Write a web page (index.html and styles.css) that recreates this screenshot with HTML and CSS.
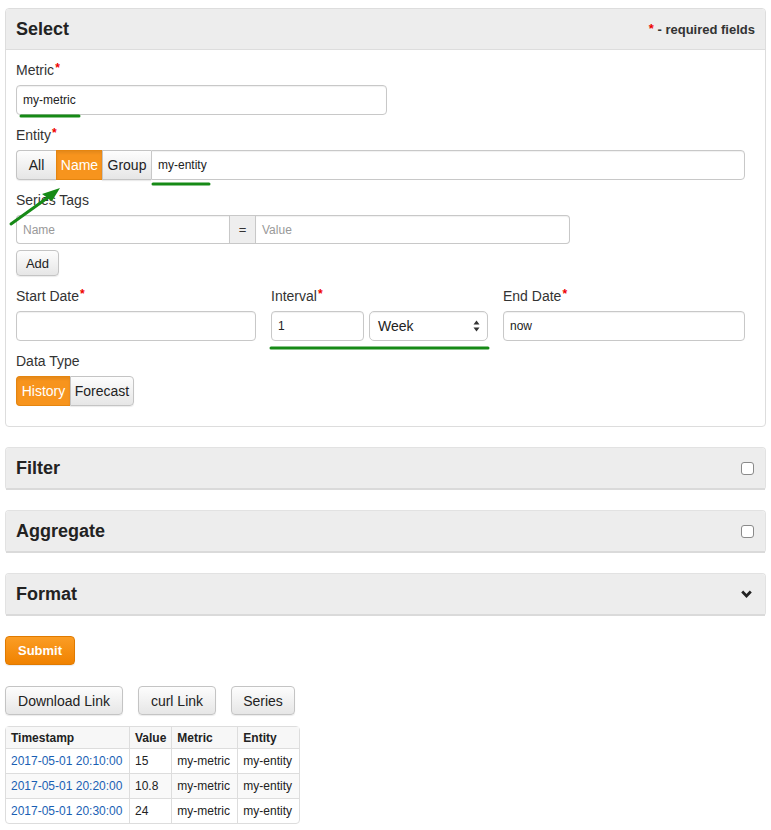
FILE: index.html
```html
<!DOCTYPE html>
<html>
<head>
<meta charset="utf-8">
<link rel="stylesheet" href="styles.css">
</head>
<body>
<div class="page">
  <div class="panel select-panel">
    <div class="panel-heading">
      <span class="title">Select</span>
      <span class="req"><span class="star">*</span> - required fields</span>
    </div>
    <div class="panel-body">
      <label class="lbl">Metric<span class="star">*</span></label>
      <div class="field metric"><span class="val">my-metric</span></div>

      <label class="lbl">Entity<span class="star">*</span></label>
      <div class="entity-group">
        <span class="btn seg">All</span>
        <span class="btn seg active">Name</span>
        <span class="btn seg">Group</span>
        <div class="field grow flat-left"><span class="val">my-entity</span></div>
      </div>

      <label class="lbl">Series Tags</label>
      <div class="tag-group">
        <div class="field tag-name flat-right"><span class="ph">Name</span></div>
        <span class="addon">=</span>
        <div class="field grow flat-left"><span class="ph">Value</span></div>
      </div>
      <div class="add-row"><span class="btn add">Add</span></div>

      <div class="date-row">
        <div class="col">
          <label class="lbl">Start Date<span class="star">*</span></label>
          <div class="field"></div>
        </div>
        <div class="col">
          <label class="lbl">Interval<span class="star">*</span></label>
          <div class="interval">
            <div class="field num"><span class="val">1</span></div>
            <div class="field sel">
              <span class="sel-text">Week</span>
              <svg class="updown" width="7" height="12" viewBox="0 0 7 12"><path d="M3.5 0.5 L6.5 4.5 L0.5 4.5 Z M3.5 11.5 L6.5 7.5 L0.5 7.5 Z" fill="#333"/></svg>
            </div>
          </div>
        </div>
        <div class="col">
          <label class="lbl">End Date<span class="star">*</span></label>
          <div class="field"><span class="val">now</span></div>
        </div>
      </div>

      <label class="lbl">Data Type</label>
      <div class="dtype">
        <span class="btn seg active">History</span>
        <span class="btn seg">Forecast</span>
      </div>
    </div>
  </div>

  <div class="panel collapsed">
    <div class="panel-heading">
      <span class="title">Filter</span>
      <span class="check"></span>
    </div>
  </div>
  <div class="panel collapsed">
    <div class="panel-heading">
      <span class="title">Aggregate</span>
      <span class="check"></span>
    </div>
  </div>
  <div class="panel collapsed">
    <div class="panel-heading">
      <span class="title">Format</span>
      <svg class="chev" width="11" height="8" viewBox="0 0 11 8"><path d="M1.2 1.6 L5.5 5.9 L9.8 1.6" fill="none" stroke="#222" stroke-width="2.8" stroke-linecap="butt" stroke-linejoin="miter"/></svg>
    </div>
  </div>

  <div class="submit-row"><span class="btn submit">Submit</span></div>

  <div class="link-row">
    <span class="btn link w-dl">Download Link</span>
    <span class="btn link w-curl">curl Link</span>
    <span class="btn link w-series">Series</span>
  </div>

  <table class="result">
    <thead>
      <tr><th class="c1">Timestamp</th><th class="c2">Value</th><th class="c3">Metric</th><th class="c4">Entity</th></tr>
    </thead>
    <tbody>
      <tr><td class="ts">2017-05-01 20:10:00</td><td>15</td><td>my-metric</td><td>my-entity</td></tr>
      <tr><td class="ts">2017-05-01 20:20:00</td><td>10.8</td><td>my-metric</td><td>my-entity</td></tr>
      <tr><td class="ts">2017-05-01 20:30:00</td><td>24</td><td>my-metric</td><td>my-entity</td></tr>
    </tbody>
  </table>

  <svg class="marks" width="771" height="830" viewBox="0 0 771 830">
    <g stroke="#168a16" stroke-width="3" stroke-linecap="round" fill="none">
      <line x1="21" y1="116" x2="79" y2="116"/>
      <line x1="153" y1="184" x2="209" y2="184"/>
      <line x1="271" y1="348" x2="488" y2="348"/>
      <line x1="11" y1="224" x2="50" y2="196"/>
    </g>
    <path d="M60 188 L42 194 L52 201 Z" fill="#168a16"/>
  </svg>
</div>
</body>
</html>
```

FILE: styles.css
```css
html, body {
  margin: 0;
  padding: 0;
  background: #fff;
}
body {
  font-family: "Liberation Sans", Arial, sans-serif;
  color: #333;
  font-size: 14px;
}
.page {
  position: relative;
  padding: 8px 5px 0 5px;
}
.panel {
  border: 1px solid #ddd;
  border-radius: 4px;
  margin-bottom: 20px;
  background: #fff;
}
.panel-heading {
  height: 40px;
  background: #ededed;
  border-bottom: 1px solid #ddd;
  border-radius: 3px 3px 0 0;
  display: flex;
  align-items: center;
  justify-content: space-between;
  padding: 0 10px;
}
.title {
  font-size: 18px;
  font-weight: bold;
  color: #222;
}
.req {
  font-size: 13px;
  font-weight: bold;
  color: #333;
}
.star {
  color: #e00;
  font-size: 12px;
  position: relative;
  top: -3px;
  margin-left: 1px;
  font-weight: bold;
}
.req .star { top: -1px; font-size: 13px; }
.panel-body {
  padding: 10px 20px 20px 10px;
}
.lbl {
  display: block;
  height: 20px;
  line-height: 20px;
  margin-bottom: 5px;
  font-size: 14px;
  color: #333;
}
.field {
  height: 30px;
  box-sizing: border-box;
  border: 1px solid #c8c8c8;
  border-radius: 4px;
  box-shadow: inset 0 1px 1px rgba(0,0,0,0.06);
  background: #fff;
  display: flex;
  align-items: center;
  padding: 0 6px;
  font-size: 12px;
  color: #222;
}
.metric {
  width: 371px;
  margin-bottom: 10px;
}
.ph { color: #999; }
.grow { flex: 1; }
.flat-left { border-top-left-radius: 0; border-bottom-left-radius: 0; }
.flat-right { border-top-right-radius: 0; border-bottom-right-radius: 0; }

.btn {
  display: inline-flex;
  align-items: center;
  justify-content: center;
  box-sizing: border-box;
  border: 1px solid #c4c4c4;
  border-radius: 4px;
  background: linear-gradient(#fdfdfd, #e6e6e6);
  color: #222;
  font-size: 14px;
  box-shadow: 0 1px 1px rgba(0,0,0,0.08);
}
.entity-group {
  display: flex;
  height: 30px;
  margin-bottom: 10px;
}
.entity-group .seg {
  height: 30px;
  border-radius: 0;
  border-right: none;
}
.entity-group .seg:first-child { width: 40px; border-radius: 4px 0 0 4px; }
.entity-group .seg:nth-child(2) { width: 46px; }
.entity-group .seg:nth-child(3) { width: 49px; }
.seg.active {
  background: #f7941d;
  border-color: #e5850f;
  color: #fff;
  box-shadow: inset 0 2px 3px rgba(0,0,0,0.08);
}
.tag-group {
  display: flex;
  width: 554px;
  height: 29px;
}
.tag-group .field { height: 29px; }
.tag-name { width: 213px; flex: none; border-right: none; }
.addon {
  width: 27px;
  box-sizing: border-box;
  background: #eee;
  border: 1px solid #c8c8c8;
  display: flex;
  align-items: center;
  justify-content: center;
  font-size: 13px;
  color: #333;
}
.tag-group .grow { border-left: none; }
.add-row {
  margin-top: 6px;
  margin-bottom: 10px;
}
.add {
  width: 43px;
  height: 26px;
  font-size: 13px;
}
.date-row {
  display: grid;
  grid-template-columns: 240px 217px 1fr;
  column-gap: 15px;
  margin-bottom: 10px;
}
.interval {
  display: flex;
  gap: 5px;
}
.num { width: 93px; flex: none; }
.sel {
  flex: 1;
  justify-content: space-between;
  padding: 0 7px 0 8px;
  font-size: 14px;
  border-radius: 5px;
}
.updown { display: block; }
.dtype {
  display: flex;
  height: 30px;
}
.dtype .seg { height: 30px; border-radius: 0; }
.dtype .seg:first-child { width: 54px; border-radius: 4px 0 0 4px; border-right: none; }
.dtype .seg:last-child { width: 64px; border-radius: 0 4px 4px 0; }

.collapsed .panel-heading {
  border-bottom: 2px solid #dadada;
  border-radius: 3px 3px 0 0;
}
.collapsed {
  border-bottom: none;
  border-color: #e2e2e2;
}
.check {
  width: 13px;
  height: 13px;
  box-sizing: border-box;
  border: 1px solid #8a8a8a;
  border-radius: 3px;
  background: #fff;
  margin-right: 1px;
}
.chev { margin-right: 3px; }

.submit {
  width: 70px;
  height: 29px;
  background: linear-gradient(#fb9d25, #f08200);
  border-color: #e07a00;
  color: #fff;
  font-weight: bold;
  font-size: 13px;
}
.link-row {
  display: flex;
  gap: 15px;
  margin-top: 21px;
  margin-bottom: 11px;
}
.link {
  height: 29px;
  font-size: 14px;
}
.w-dl { width: 118px; }
.w-curl { width: 78px; }
.w-series { width: 64px; }
.result {
  border-collapse: separate;
  border-spacing: 0;
  border: 1px solid #ddd;
  border-radius: 4px;
  font-size: 12px;
  color: #222;
}
.result th, .result td {
  text-align: left;
  padding: 0 5px;
  border-left: 1px solid #ddd;
  border-top: 1px solid #ddd;
  white-space: nowrap;
}
.result th:first-child, .result td:first-child { border-left: none; }
.result thead th { border-top: none; height: 21px; background: #f7f7f7; font-weight: bold; }
.result tbody td { height: 24px; }
.result tbody tr:nth-child(2) td { background: #f9f9f9; }
.result .c1 { width: 113px; }
.result .c2 { width: 31px; }
.result .c3 { width: 55px; }
.result .c4 { width: 51px; }
.ts { color: #1a5fb4; }

.marks {
  position: absolute;
  left: 0;
  top: 0;
  pointer-events: none;
}
```
